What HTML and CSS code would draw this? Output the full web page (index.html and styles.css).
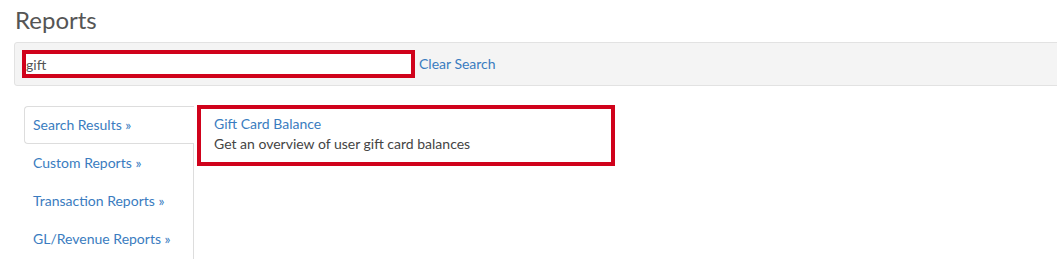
FILE: index.html
```html
<!DOCTYPE html>
<html>
<head>
<meta charset="utf-8">
<link rel="stylesheet" href="styles.css">
</head>
<body>
<div class="page">
  <h1 class="title">Reports</h1>
  <div class="search-well">
    <div class="search-input">gift</div>
    <a class="clear-link" href="#">Clear Search</a>
  </div>
  <div class="reports">
    <ul class="side-tabs">
      <li class="tab active"><a href="#">Search Results »</a></li>
      <li class="tab"><a href="#">Custom Reports »</a></li>
      <li class="tab"><a href="#">Transaction Reports »</a></li>
      <li class="tab"><a href="#">GL/Revenue Reports »</a></li>
    </ul>
    <div class="results">
      <div class="result-item">
        <a class="result-title" href="#">Gift Card Balance</a>
        <div class="result-desc">Get an overview of user gift card balances</div>
      </div>
    </div>
  </div>
</div>
</body>
</html>
```

FILE: styles.css
```css
html, body {
  margin: 0;
  padding: 0;
  background: #fff;
  overflow: hidden;
}
body {
  font-family: Lato, "Open Sans", sans-serif;
  font-size: 14px;
  line-height: 20px;
  color: #444;
}
a {
  color: #3a7cc0;
  text-decoration: none;
}
.page {
  width: 1080px;
  height: 259px;
  padding: 5px 0 0 14px;
  box-sizing: border-box;
  overflow: hidden;
}
.title {
  margin: 0 0 7px 1px;
  font-size: 24px;
  font-weight: 400;
  line-height: 30px;
  color: #555;
}
.search-well {
  display: flex;
  align-items: center;
  height: 42px;
  padding: 0 7px;
  background: #f4f4f4;
  border: 1px solid #e2e2e2;
  border-radius: 3px;
  box-sizing: content-box;
}
.search-input {
  box-sizing: border-box;
  width: 393px;
  height: 28px;
  margin-top: -1px;
  border: 4px solid #d0021b;
  background: #fff;
  padding: 1px 0 0 0;
  line-height: 20px;
  color: #555;
}
.clear-link {
  margin-left: 4px;
  margin-top: 0;
}
.reports {
  display: flex;
  align-items: flex-start;
  margin-top: 20px;
  padding-left: 10px;
}
.side-tabs {
  list-style: none;
  margin: 0;
  padding: 0;
  width: 169px;
  height: 153px;
  border-right: 1px solid #ddd;
}
.tab a {
  display: block;
  padding: 8px 8px;
  line-height: 20px;
  border: 1px solid transparent;
  border-right: 0;
}
.tab.active a {
  border-color: #ddd;
  border-radius: 4px 0 0 4px;
  margin-right: -1px;
  background: #fff;
  position: relative;
}
.results {
  margin: -1px 0 0 3px;
}
.result-item {
  box-sizing: border-box;
  width: 418px;
  height: 61px;
  border: 4px solid #d0021b;
  padding: 5px 4px 0 13px;
}
.result-title {
  display: block;
}
```
